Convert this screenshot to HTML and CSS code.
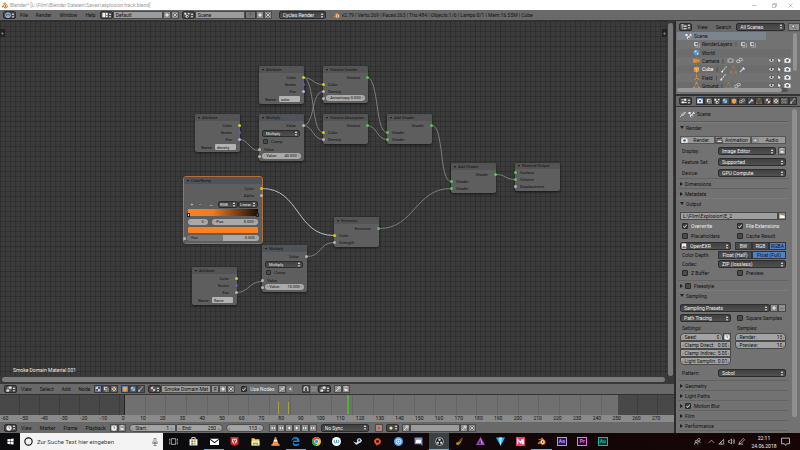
FILE: index.html
```html
<!DOCTYPE html>
<html lang="de">
<head>
  <meta charset="UTF-8">
  <title>Blender* [L:\Film\Blender Dateien\Saves\explosion track.blend]</title>
  <link rel="stylesheet" href="styles.css">
</head>
<body>
  <svg class="sprite" aria-hidden="true">
    <symbol id="blender" viewBox="0 0 16 16"><path d="M1 11 8 5H3V3.500h5L7 2l2-1 5 5a5 5 0 1 1-8.500 5L3 13z" fill="#ee7a1a"/><circle cx="10" cy="9" r="3.200" fill="#fff"/><circle cx="10" cy="9" r="1.700" fill="#27507f"/></symbol>
    <symbol id="info" viewBox="0 0 16 16"><circle cx="8" cy="8" r="7" fill="#dfe6ee"/><circle cx="8" cy="8" r="5.500" fill="#31639c"/><path d="M7 3h2v2H7zM7 6.500h2V13H7z" fill="#fff"/></symbol>
    <symbol id="layout" viewBox="0 0 16 16"><path d="M1 2h8v12H1zM10.500 2H15v7h-4.500zM10.500 10.500H15V14h-4.500z" fill="#eee"/></symbol>
    <symbol id="scene" viewBox="0 0 16 16"><path d="M1 2h5v5H1zM9 6l4-5 3 5z" fill="#eee"/><circle cx="8" cy="11" r="4" fill="#ddd"/><circle cx="9" cy="12" r="2" fill="#555"/></symbol>
    <symbol id="nodes" viewBox="0 0 16 16"><path d="M1 9h7v6H1zM7 1h8v6H7z" fill="#e6e6e6"/><path d="M4 9V4h3M11 7v5H8" fill="none" stroke="#ddd"/></symbol>
    <symbol id="tree" viewBox="0 0 16 16"><path d="M3 1v12h5M3 6h5" fill="none" stroke="#eee" stroke-width="1.500"/><path d="M8 4h7v3H8zM8 11h7v3H8zM1 1h6v2H1z" fill="#eee"/></symbol>
    <symbol id="sliders" viewBox="0 0 16 16"><path d="M1 3h14v3H1zM1 10h14v3H1z" fill="#ccc"/><path d="M9 2h4v5H9zM3 9h4v5H3z" fill="#fff"/></symbol>
    <symbol id="clock" viewBox="0 0 16 16"><circle cx="8" cy="8" r="7" fill="#eee"/><path d="M8 3v5l3 2" fill="none" stroke="#333" stroke-width="1.500"/></symbol>
    <symbol id="ball" viewBox="0 0 16 16"><circle cx="8" cy="8" r="6.500" fill="#d5c8c4"/><path d="M8 1.500A6.500 6.500 0 0 1 14.500 8H8zM1.500 8H8v6.500A6.500 6.500 0 0 1 1.500 8" fill="#6c504b"/></symbol>
    <symbol id="world" viewBox="0 0 16 16"><circle cx="8" cy="8" r="6.500" fill="#5a96c6"/><path d="M4 4c3-2 5 0 4 2S4 8 3 7zM9 9c3-1 4 0 3 3s-3 1-3-3" fill="#cfe3ee"/></symbol>
    <symbol id="camera" viewBox="0 0 16 16"><path d="M1 4h3l1-2h5l1 2h4v9H1z" fill="#eef0f2"/><circle cx="8" cy="8" r="3" fill="#4a5969"/></symbol>
    <symbol id="film" viewBox="0 0 16 16"><path d="M1 6h14v8H1zM1 2l13-1v3L1 5z" fill="#333"/><path d="M3 8h10v4H3z" fill="#ddd"/></symbol>
    <symbol id="sound" viewBox="0 0 16 16"><path d="M1 3h13v9H1z" fill="none" stroke="#666"/><path d="M3 6h3l4-3v9L6 9H3z" fill="#ddd" stroke="#777"/></symbol>
    <symbol id="layers" viewBox="0 0 16 16"><path d="M2 2h10v10H2z" fill="#eee" stroke="#444"/><circle cx="8" cy="7" r="3" fill="#667"/><path d="M5 14h10V5" fill="none" stroke="#ddd"/></symbol>
    <symbol id="cube" viewBox="0 0 16 16"><path d="m8 1 6 3v8l-6 3-6-3V4z" fill="#ec9340"/><path d="m2 4 6 3 6-3M8 7v8" fill="none" stroke="#ffe0b5"/></symbol>
    <symbol id="mesh" viewBox="0 0 16 16"><path d="M8 1.500 15 14H1z" fill="none" stroke="#e88b2d" stroke-width="1.500"/><path d="M6 0h4v4H6zM0 12h4v4H0zM12 12h4v4h-4z" fill="#ed952f"/></symbol>
    <symbol id="cam-object" viewBox="0 0 16 16"><path d="M0 4h10v3l5-3v9l-5-3v3H0z" fill="#ec8725"/></symbol>
    <symbol id="field" viewBox="0 0 16 16"><path d="M8 1v8L2 14M8 9l7 4" fill="none" stroke="#f28c28" stroke-width="2"/></symbol>
    <symbol id="link" viewBox="0 0 16 16"><ellipse cx="5" cy="10" rx="4" ry="3" fill="none" stroke="#ddd" stroke-width="1.500"/><ellipse cx="11" cy="6" rx="4" ry="3" fill="none" stroke="#ddd" stroke-width="1.500"/></symbol>
    <symbol id="wrench" viewBox="0 0 16 16"><path d="m2 14 8-8" stroke="#c6d2e6" stroke-width="3"/><path d="M9 2 8 7l4 2 3-4-3 1-1-3z" fill="#dce4ef"/></symbol>
    <symbol id="curve" viewBox="0 0 16 16"><path d="M2 14C3 5 7 13 8 7s3-4 6-5" fill="none" stroke="#d6d6d6" stroke-width="1.800"/><circle cx="3" cy="13" r="2" fill="#eee"/></symbol>
    <symbol id="checker" viewBox="0 0 16 16"><path d="M2 2h12v12H2z" fill="#eadfd6"/><path d="M2 2h4v4H2zM10 2h4v4h-4zM6 6h4v4H6zM2 10h4v4H2zM10 10h4v4h-4z" fill="#735b51"/></symbol>
    <symbol id="particles" viewBox="0 0 16 16"><path d="M3 1v14M8 3v11M13 1v14M1 4h14M1 11h14" stroke="#cfc6b5" stroke-width="1.500" stroke-dasharray="2 1"/></symbol>
    <symbol id="plus" viewBox="0 0 16 16"><path d="M6 2h4v4h4v4h-4v4H6v-4H2V6h4z" fill="#fff" stroke="#555"/></symbol>
    <symbol id="cross" viewBox="0 0 16 16"><path d="m3 3 10 10M13 3 3 13" stroke="#555" stroke-width="4"/><path d="m3 3 10 10M13 3 3 13" stroke="#eee" stroke-width="2"/></symbol>
    <symbol id="eye" viewBox="0 0 16 16"><path d="M1 6c4 7 10 7 14 0-4-3-10-3-14 0" fill="#e8e8e8" stroke="#333"/><circle cx="8" cy="7" r="2" fill="#222"/></symbol>
    <symbol id="cursor" viewBox="0 0 16 16"><path d="m4 1 9 8-4 1 2 5-2 1-2-5-3 2z" fill="#eee" stroke="#222"/></symbol>
    <symbol id="search" viewBox="0 0 16 16"><circle cx="6" cy="6" r="4" fill="#ddd" stroke="#555" stroke-width="2"/><path d="m9 9 5 5" stroke="#555" stroke-width="2"/></symbol>
    <symbol id="pin" viewBox="0 0 16 16"><path d="m2 14 5-5M5 6l5 5M7 8l6-6 2 2-6 6" stroke="#ddd" stroke-width="2" fill="none"/></symbol>
    <symbol id="lock" viewBox="0 0 16 16"><path d="M3 7h10v7H3z" fill="#eee" stroke="#555"/><path d="M5 7V4a3 3 0 0 1 6 0" fill="none" stroke="#eee" stroke-width="1.800"/></symbol>
    <symbol id="folder" viewBox="0 0 16 16"><path d="M1 3h6l1 2h7v9H1z" fill="#eae2bd" stroke="#655"/><path d="M3 7h12v6H2z" fill="#fff8dc"/></symbol>
    <symbol id="image" viewBox="0 0 16 16"><path d="M2 1h12v14H2z" fill="#eee"/><path d="m3 13 4-6 3 3 1-2 2 5z" fill="#a45555"/></symbol>
    <symbol id="magnet" viewBox="0 0 16 16"><path d="M3 13V7a5 5 0 0 1 10 0v6" fill="none" stroke="#ddd" stroke-width="3"/></symbol>
    <symbol id="record" viewBox="0 0 16 16"><circle cx="8" cy="8" r="5" fill="#d34a3c" stroke="#f0b1a6"/></symbol>
    <symbol id="key" viewBox="0 0 16 16"><circle cx="11" cy="5" r="3" fill="none" stroke="#eee" stroke-width="2"/><path d="m9 7-7 7M4 12l2 2" stroke="#eee" stroke-width="2"/></symbol>
    <symbol id="diamond" viewBox="0 0 16 16"><path d="m8 3 5 5-5 5-5-5z" fill="#f0e2a0"/></symbol>
    <symbol id="play" viewBox="0 0 16 16"><path d="M4 2v12l9-6z" fill="#fff" stroke="#444"/></symbol>
    <symbol id="back" viewBox="0 0 16 16"><path d="M12 2v12L3 8z" fill="#fff" stroke="#444"/></symbol>
    <symbol id="rewind" viewBox="0 0 16 16"><path d="M8 3v10L2 8zM14 3v10L8 8z" fill="#fff" stroke="#555"/></symbol>
    <symbol id="forward" viewBox="0 0 16 16"><path d="M8 3v10l6-5zM2 3v10l6-5z" fill="#fff" stroke="#555"/></symbol>
  </svg>

  <header class="titlebar">
    <svg class="icon"><use href="#blender"/></svg>
    <span class="title">Blender* [L:\Film\Blender Dateien\Saves\explosion track.blend]</span>
    <button class="win-btn" aria-label="Minimieren"><svg viewBox="0 0 10 10"><path d="M1 5h8"/></svg></button>
    <button class="win-btn" aria-label="Verkleinern"><svg viewBox="0 0 10 10"><path d="M1 3h6v6H1zM3 3V1h6v6H7"/></svg></button>
    <button class="win-btn" aria-label="Schließen"><svg viewBox="0 0 10 10"><path d="m1 1 8 8M9 1 1 9"/></svg></button>
  </header>

  <nav class="bar info-bar">
    <button class="editor-type" aria-label="Editor type"><svg class="icon"><use href="#info"/></svg></button>
    <div class="menus">
      <button>File</button><button>Render</button><button>Window</button><button>Help</button>
    </div>
    <div class="group snug">
      <button class="editor-type" aria-label="Screen"><svg class="icon"><use href="#layout"/></svg></button>
      <input class="name-field" aria-label="Screen name" value="Default">
      <button class="tool light" aria-label="Add screen"><svg class="icon"><use href="#plus"/></svg></button>
      <button class="tool light" aria-label="Delete screen"><svg class="icon"><use href="#cross"/></svg></button>
    </div>
    <div class="group">
      <button class="editor-type" aria-label="Scene"><svg class="icon"><use href="#scene"/></svg></button>
      <input class="name-field" aria-label="Scene name" value="Scene">
      <button class="tool users">7</button>
      <button class="tool light" aria-label="Add scene"><svg class="icon"><use href="#plus"/></svg></button>
      <button class="tool light" aria-label="Delete scene"><svg class="icon"><use href="#cross"/></svg></button>
    </div>
    <select class="engine" aria-label="Render engine"><option>Cycles Render</option></select>
    <svg class="icon logo"><use href="#blender"/></svg>
    <span class="stats">v2.79 | Verts:269 | Faces:263 | Tris:484 | Objects:1/6 | Lamps:0/1 | Mem:16.55M | Cube</span>
  </nav>

  <div class="workspace">
    <main class="editors">
      <section class="node-editor">
        <div class="canvas">
          <svg class="links">
            <path d="M303 56.500C313 56.500 313 63.500 323 63.500"/>
            <path d="M303 56.500C315 56.500 311 111.500 323 111.500"/>
            <path d="M303 104.500C315 104.500 311 70.500 323 70.500"/>
            <path d="M303 104.500C313 104.500 313 118.500 323 118.500"/>
            <path d="M239 118.500C249 118.500 249 129.500 259 129.500"/>
            <path d="M367 56.500C379 56.500 375 111.500 387 111.500"/>
            <path d="M367 104.500C377 104.500 377 118.500 387 118.500"/>
            <path d="M432 104.500C444 104.500 439 160.500 451 160.500"/>
            <path d="M379 207.500C415 207.500 415 167.500 451 167.500"/>
            <path d="M496 153.500C506 153.500 505 158.500 515 158.500"/>
            <path class="active" d="M262 167.500C300 167.500 296 214.500 334 214.500"/>
            <path d="M307 235.500C322 235.500 319 221.500 334 221.500"/>
            <path d="M236 271.500C249 271.500 249 260.500 262 260.500"/>
          </svg>

          <article class="node attr-color">
            <h2>Attribute</h2>
            <p class="out yellow">Color</p>
            <p class="out blue">Vector</p>
            <p class="out gray">Fac</p>
            <label class="name space">Name: <input value="color"></label>
          </article>

          <article class="node scatter">
            <h2>Volume Scatter</h2>
            <p class="out green">Volume</p>
            <p class="in yellow">Color</p>
            <p class="in gray">Density</p>
            <div class="in gray"><label class="num">Anisotropy: <input value="0.000"></label></div>
          </article>

          <article class="node attr-density">
            <h2>Attribute</h2>
            <p class="out yellow">Color</p>
            <p class="out blue">Vector</p>
            <p class="out gray">Fac</p>
            <label class="name space">Name: <input value="density"></label>
          </article>

          <article class="node math multiply-a">
            <h2>Multiply</h2>
            <p class="out gray">Value</p>
            <select class="space" aria-label="Operation"><option>Multiply</option></select>
            <label class="check space"><input type="checkbox"> Clamp</label>
            <p class="in gray space">Value</p>
            <div class="in gray"><label class="num">Value: <input value="40.000"></label></div>
          </article>

          <article class="node absorption">
            <h2>Volume Absorption</h2>
            <p class="out green">Volume</p>
            <p class="in yellow">Color</p>
            <p class="in gray">Density</p>
          </article>

          <article class="node add-a">
            <h2>Add Shader</h2>
            <p class="out green">Shader</p>
            <p class="in green">Shader</p>
            <p class="in green">Shader</p>
          </article>

          <article class="node add-b">
            <h2>Add Shader</h2>
            <p class="out green">Shader</p>
            <p class="in green">Shader</p>
            <p class="in green">Shader</p>
          </article>

          <article class="node output">
            <h2>Material Output</h2>
            <p class="in green">Surface</p>
            <p class="in green">Volume</p>
            <p class="in gray">Displacement</p>
          </article>

          <article class="node emission">
            <h2>Emission</h2>
            <p class="out green">Emission</p>
            <p class="in yellow">Color</p>
            <p class="in gray">Strength</p>
          </article>

          <article class="node ramp">
            <h2>ColorRamp</h2>
            <p class="out yellow">Color</p>
            <p class="out gray">Alpha</p>
            <div class="ramp-tools">
              <button>+</button><button>−</button><button>↔</button>
              <select aria-label="Color mode"><option>RGB</option></select>
              <select aria-label="Interpolation"><option>Linear</option></select>
            </div>
            <div class="gradient"><i class="stop"></i><i class="stop end"></i></div>
            <div class="ramp-pos">
              <label class="num"><input aria-label="Stop" value="0"></label>
              <label class="num">Pos: <input value="0.000"></label>
            </div>
            <button class="swatch" aria-label="Stop color"></button>
            <div class="in gray"><label class="num factor">Fac: <input value="0.500"></label></div>
          </article>

          <article class="node math multiply-b">
            <h2>Multiply</h2>
            <p class="out gray">Value</p>
            <select class="space" aria-label="Operation"><option>Multiply</option></select>
            <label class="check space"><input type="checkbox"> Clamp</label>
            <p class="in gray space">Value</p>
            <div class="in gray"><label class="num">Value: <input value="10.000"></label></div>
          </article>

          <article class="node attr-flame">
            <h2>Attribute</h2>
            <p class="out yellow">Color</p>
            <p class="out blue">Vector</p>
            <p class="out gray">Fac</p>
            <label class="name space">Name: <input value="flame"></label>
          </article>

          <button class="expand left">+</button>
          <button class="expand right">+</button>
          <span class="material-name">Smoke Domain Material.001</span>
        </div>
        <div class="scroll-y"></div>
        <div class="scroll-x"></div>
      </section>

      <nav class="bar">
        <button class="editor-type" aria-label="Node editor"><svg class="icon"><use href="#nodes"/></svg></button>
        <div class="menus">
          <button>View</button><button>Select</button><button>Add</button><button>Node</button>
        </div>
        <div class="group snug">
          <button class="tool on" aria-label="Shader nodes"><svg class="icon"><use href="#ball"/></svg></button>
          <button class="tool" aria-label="Compositing nodes"><svg class="icon"><use href="#layers"/></svg></button>
          <button class="tool" aria-label="Texture nodes"><svg class="icon"><use href="#checker"/></svg></button>
        </div>
        <div class="group">
          <button class="tool on" aria-label="Object"><svg class="icon"><use href="#cube"/></svg></button>
          <button class="tool" aria-label="World"><svg class="icon"><use href="#world"/></svg></button>
          <button class="tool" aria-label="Line style"><svg class="icon"><use href="#curve"/></svg></button>
        </div>
        <div class="group">
          <button class="editor-type" aria-label="Material"><svg class="icon"><use href="#ball"/></svg></button>
          <input class="name-field" aria-label="Material name" value="Smoke Domain Mat..">
          <button class="tool light">F</button>
          <button class="tool light" aria-label="Add material"><svg class="icon"><use href="#plus"/></svg></button>
          <button class="tool light" aria-label="Unlink material"><svg class="icon"><use href="#cross"/></svg></button>
        </div>
        <label class="check use-nodes"><input type="checkbox" checked> Use Nodes</label>
        <div class="group">
          <button class="tool light" aria-label="Pin"><svg class="icon"><use href="#pin"/></svg></button>
          <button class="tool faint" aria-label="Parent"><svg class="icon"><use href="#back"/></svg></button>
        </div>
        <div class="group wide">
          <button class="tool" aria-label="Snap"><svg class="icon"><use href="#magnet"/></svg></button>
          <button class="tool faint" aria-label="Grid"><svg class="icon"><use href="#particles"/></svg></button>
          <button class="editor-type" aria-label="Snap element"><svg class="icon"><use href="#nodes"/></svg></button>
        </div>
        <div class="group">
          <button class="tool light" aria-label="Copy"><svg class="icon"><use href="#key"/></svg></button>
          <button class="tool light" aria-label="Paste"><svg class="icon"><use href="#lock"/></svg></button>
        </div>
      </nav>

      <section class="timeline">
        <div class="track">
          <div class="outside before"></div>
          <div class="range">
            <i class="keyframe first"></i><i class="keyframe second"></i><i class="playhead"></i>
          </div>
          <div class="outside after"></div>
        </div>
        <div class="ruler">
          <span>-60</span><span>-50</span><span>-40</span><span>-30</span><span>-20</span><span>-10</span><span>0</span><span>10</span><span>20</span><span>30</span><span>40</span><span>50</span><span>60</span><span>70</span><span>80</span><span>90</span><span>100</span><span>110</span><span>120</span><span>130</span><span>140</span><span>150</span><span>160</span><span>170</span><span>180</span><span>190</span><span>200</span><span>210</span><span>220</span><span>230</span><span>240</span><span>250</span><span>260</span><span>270</span>
        </div>
      </section>

      <nav class="bar timeline-bar">
        <button class="editor-type" aria-label="Timeline"><svg class="icon"><use href="#clock"/></svg></button>
        <div class="menus">
          <button>View</button><button>Marker</button><button>Frame</button><button>Playback</button>
        </div>
        <div class="group snug">
          <button class="tool light" aria-label="Preview range"><svg class="icon"><use href="#clock"/></svg></button>
          <button class="tool light" aria-label="Lock time"><svg class="icon"><use href="#lock"/></svg></button>
        </div>
        <div class="group frames">
          <label class="num">Start: <input value="1"></label>
          <label class="num">End: <input value="250"></label>
        </div>
        <label class="num current"><input aria-label="Current frame" value="113"></label>
        <div class="group transport">
          <button class="tool light" aria-label="Jump to start"><svg class="icon"><use href="#rewind"/></svg></button>
          <button class="tool light" aria-label="Previous key"><svg class="icon"><use href="#rewind"/></svg></button>
          <button class="tool light" aria-label="Play reversed"><svg class="icon"><use href="#back"/></svg></button>
          <button class="tool light" aria-label="Play"><svg class="icon"><use href="#play"/></svg></button>
          <button class="tool light" aria-label="Next key"><svg class="icon"><use href="#forward"/></svg></button>
          <button class="tool light" aria-label="Jump to end"><svg class="icon"><use href="#forward"/></svg></button>
        </div>
        <select class="sync" aria-label="Sync"><option>No Sync</option></select>
        <button class="tool light auto" aria-label="Record"><svg class="icon"><use href="#record"/></svg></button>
        <button class="editor-type" aria-label="Keyframe type"><svg class="icon"><use href="#diamond"/></svg></button>
        <div class="group keying">
          <button class="tool light" aria-label="Keying set"><svg class="icon"><use href="#key"/></svg></button>
          <input class="name-field" aria-label="Active keying set">
          <button class="tool light" aria-label="Insert keyframe"><svg class="icon"><use href="#key"/></svg></button>
          <button class="tool light" aria-label="Delete keyframe"><svg class="icon"><use href="#cross"/></svg></button>
        </div>
      </nav>
    </main>

    <aside class="sidebar">
      <section class="outliner">
        <nav class="bar">
          <button class="editor-type" aria-label="Outliner"><svg class="icon"><use href="#tree"/></svg></button>
          <div class="menus"><button>View</button><button>Search</button></div>
          <select class="display-mode" aria-label="Display mode"><option>All Scenes</option></select>
          <button class="tool light filter" aria-label="Filter"><svg class="icon"><use href="#search"/></svg></button>
        </nav>
        <div class="tree-box">
          <ul class="tree">
            <li class="root selected"><svg class="icon"><use href="#scene"/></svg><span>Scene</span></li>
            <li><svg class="icon"><use href="#layers"/></svg><span>RenderLayers</span><b>|</b><svg class="icon"><use href="#layers"/></svg><svg class="icon"><use href="#layers"/></svg></li>
            <li><svg class="icon"><use href="#world"/></svg><span>World</span></li>
            <li><svg class="icon"><use href="#cam-object"/></svg><span>Camera</span><b>|</b><svg class="icon dim"><use href="#camera"/></svg><svg class="icon"><use href="#link"/></svg>
              <div class="toggles"><svg class="icon"><use href="#eye"/></svg><svg class="icon"><use href="#cursor"/></svg><svg class="icon"><use href="#camera"/></svg></div></li>
            <li class="active"><svg class="icon"><use href="#cube"/></svg><span>Cube</span><b>|</b><svg class="icon"><use href="#curve"/></svg><svg class="icon dim"><use href="#mesh"/></svg><svg class="icon"><use href="#wrench"/></svg>
              <div class="toggles"><svg class="icon"><use href="#eye"/></svg><svg class="icon"><use href="#cursor"/></svg><svg class="icon"><use href="#camera"/></svg></div></li>
            <li><svg class="icon"><use href="#field"/></svg><span>Field</span><b>|</b><svg class="icon"><use href="#curve"/></svg>
              <div class="toggles"><svg class="icon"><use href="#eye"/></svg><svg class="icon"><use href="#cursor"/></svg><svg class="icon"><use href="#camera"/></svg></div></li>
            <li><svg class="icon"><use href="#mesh"/></svg><span>Ground</span><b>|</b><svg class="icon dim"><use href="#mesh"/></svg><svg class="icon"><use href="#link"/></svg>
              <div class="toggles"><svg class="icon"><use href="#eye"/></svg><svg class="icon"><use href="#cursor"/></svg><svg class="icon"><use href="#camera"/></svg></div></li>
          </ul>
          <div class="tree-scroll"></div>
        </div>
        <div class="tree-scroll-x"></div>
      </section>

      <section class="properties">
        <nav class="bar">
          <button class="editor-type" aria-label="Properties"><svg class="icon"><use href="#sliders"/></svg></button>
          <div class="tabs">
            <button class="on" aria-label="Render"><svg class="icon"><use href="#camera"/></svg></button>
            <button aria-label="Render layers"><svg class="icon"><use href="#layers"/></svg></button>
            <button aria-label="Scene"><svg class="icon"><use href="#scene"/></svg></button>
            <button aria-label="World"><svg class="icon"><use href="#world"/></svg></button>
            <button aria-label="Object"><svg class="icon"><use href="#cube"/></svg></button>
            <button aria-label="Constraints"><svg class="icon"><use href="#link"/></svg></button>
            <button aria-label="Modifiers"><svg class="icon"><use href="#wrench"/></svg></button>
            <button aria-label="Data"><svg class="icon dim"><use href="#mesh"/></svg></button>
            <button aria-label="Material"><svg class="icon"><use href="#ball"/></svg></button>
            <button aria-label="Texture"><svg class="icon"><use href="#checker"/></svg></button>
            <button aria-label="Particles"><svg class="icon"><use href="#particles"/></svg></button>
            <button aria-label="Physics"><svg class="icon"><use href="#curve"/></svg></button>
          </div>
        </nav>
        <div class="panels-box">
          <div class="panels">
            <div class="context"><svg class="icon"><use href="#pin"/></svg><svg class="icon"><use href="#scene"/></svg><span>Scene</span></div>

            <h3 class="open">Render</h3>
            <div class="panel render-panel">
              <div class="row joined">
                <button class="action"><svg class="icon"><use href="#camera"/></svg><span>Render</span></button>
                <button class="action"><svg class="icon"><use href="#film"/></svg><span>Animation</span></button>
                <button class="action"><svg class="icon"><use href="#sound"/></svg><span>Audio</span></button>
              </div>
              <div class="row field"><label for="display">Display:</label><select id="display"><option>Image Editor</option></select><button class="tool light" aria-label="Lock interface"><svg class="icon"><use href="#lock"/></svg></button></div>
              <div class="row field"><label for="feature">Feature Set:</label><select id="feature"><option>Supported</option></select></div>
              <div class="row field"><label for="device">Device:</label><select id="device"><option>GPU Compute</option></select></div>
            </div>
            <h3>Dimensions</h3>
            <h3>Metadata</h3>

            <h3 class="open">Output</h3>
            <div class="panel">
              <div class="row path"><input aria-label="Output path" value="L:\Film\Explosion\E_2"><button class="tool light" aria-label="Browse"><svg class="icon"><use href="#folder"/></svg></button></div>
              <div class="row halves">
                <label class="check"><input type="checkbox" checked> Overwrite</label>
                <label class="check"><input type="checkbox" checked> File Extensions</label>
              </div>
              <div class="row halves">
                <label class="check"><input type="checkbox"> Placeholders</label>
                <label class="check"><input type="checkbox"> Cache Result</label>
              </div>
              <div class="row halves">
                <div class="format"><svg class="icon"><use href="#image"/></svg><select aria-label="File format"><option>OpenEXR</option></select></div>
                <div class="switch"><button>BW</button><button>RGB</button><button class="on">RGBA</button></div>
              </div>
              <div class="row field tight"><span>Color Depth:</span><div class="switch"><button>Float (Half)</button><button class="on">Float (Full)</button></div></div>
              <div class="row field tight"><label for="codec">Codec:</label><select id="codec"><option>ZIP (lossless)</option></select></div>
              <div class="row halves tight">
                <label class="check"><input type="checkbox"> Z Buffer</label>
                <label class="check"><input type="checkbox"> Preview</label>
              </div>
            </div>
            <h3><label class="check"><input type="checkbox"> Freestyle</label></h3>

            <h3 class="open">Sampling</h3>
            <div class="panel">
              <div class="row presets"><select aria-label="Sampling presets"><option>Sampling Presets</option></select><button class="tool light" aria-label="Add preset"><svg class="icon"><use href="#plus"/></svg></button><button class="tool light" aria-label="Remove preset">−</button></div>
              <div class="row halves">
                <select aria-label="Integrator"><option>Path Tracing</option></select>
                <label class="check"><input type="checkbox"> Square Samples</label>
              </div>
              <div class="row halves"><span>Settings:</span><span>Samples:</span></div>
              <div class="row halves stacks tight">
                <div class="stack">
                  <div class="seed"><label class="num">Seed: <input value="0"></label><button class="tool light" aria-label="Animate seed"><svg class="icon"><use href="#clock"/></svg></button></div>
                  <label class="num">Clamp Direct: <input value="0.00"></label>
                  <label class="num">Clamp Indirec: <input value="5.00"></label>
                  <label class="num">Light Samplin: <input value="0.01"></label>
                </div>
                <div class="stack">
                  <label class="num">Render: <input value="15"></label>
                  <label class="num">Preview: <input value="10"></label>
                </div>
              </div>
              <div class="row field pattern"><label for="pattern">Pattern:</label><select id="pattern"><option>Sobol</option></select></div>
            </div>
            <h3>Geometry</h3>
            <h3>Light Paths</h3>
            <h3><label class="check"><input type="checkbox" checked> Motion Blur</label></h3>
            <h3>Film</h3>
            <h3>Performance</h3>
            <h3>Post Processing</h3>
          </div>
          <div class="panel-scroll"></div>
        </div>
      </section>
    </aside>
  </div>

  <footer class="taskbar">
    <button class="start" aria-label="Start"><svg viewBox="0 0 16 16"><path d="m1 3 6-1v5.500H1zM8 2l7-1v6.500H8zM1 8.500h6V14l-6-1zM8 8.500h7V15l-7-1z" fill="#fff"/></svg></button>
    <label class="search">
      <svg viewBox="0 0 16 16"><circle cx="8" cy="8" r="6.500" fill="none" stroke="#111" stroke-width="2"/></svg>
      <input placeholder="Zur Suche Text hier eingeben">
      <svg viewBox="0 0 16 16"><path d="M6 1h4v8H6zM3.500 7v4h9V7M8 11v4M5 15h6" fill="none" stroke="#333"/></svg>
    </label>
    <div class="apps">
      <button aria-label="Taskansicht"><svg viewBox="0 0 16 16"><path d="M4 3h8v10H4zM2 4H0v8h2M14 4h2v8h-2" fill="none" stroke="#ddd" stroke-width="1.300"/></svg></button>
      <button aria-label="Store"><svg viewBox="0 0 16 16"><path d="M1 4h14v11H1z" fill="#fff"/><path d="M5 4V1h6v3" fill="none" stroke="#fff" stroke-width="1.500"/><path d="M4 6h3.500v3.500H4z" fill="#e74b2c"/><path d="M8.500 6H12v3.500H8.500z" fill="#7cb829"/><path d="M4 10.500h3.500V14H4z" fill="#28a3de"/><path d="M8.500 10.500H12V14H8.500z" fill="#f8b621"/></svg></button>
      <button class="running" aria-label="Mail"><svg viewBox="0 0 16 16"><path d="M0 3h16l-8 6zM0 5l8 6 8-6v9H0z" fill="#fff"/></svg></button>
      <button aria-label="Virenschutz"><svg viewBox="0 0 16 16"><path d="M1 0h14v13l-7 3-7-3z" fill="#d8262c"/><path d="M4 3h8v6l-4 4-4-4z" fill="#fff"/><path d="m6 5 2 5 2-5" fill="none" stroke="#d8262c" stroke-width="2"/></svg></button>
      <button aria-label="Explorer"><svg viewBox="0 0 16 16"><path d="M1 2h5l1 2h8v11H1z" fill="#f5ce62"/><path d="M1 7h14v8H1z" fill="#fbe69c"/><path d="M4 10h8v5h-2v-3H6v3H4z" fill="#3aa4dc"/></svg></button>
      <button aria-label="VLC"><svg viewBox="0 0 16 16"><path d="M7 0h2l5 14H2z" fill="#f58220"/><path d="m5.500 5h5l1 3h-7zM3 12h10v2H2z" fill="#fff"/><path d="M0 13h16l-1 3H1z" fill="#e8751a"/></svg></button>
      <button class="running" aria-label="Edge"><svg viewBox="0 0 16 16"><path d="M4 9h11C16 3 12 0 8 0 4 0 1 3 1 7c2-3 4-4 6-4 3 0 4 1 4 3H5C2 8 2 16 9 16c2 0 4-1 5-2v-3c-4 3-9 2-10-2" fill="#1683d8"/></svg></button>
      <button aria-label="Chrome"><svg viewBox="0 0 16 16"><circle cx="8" cy="8" r="8" fill="#f2c51e"/><path d="M1 4a8 8 0 0 1 14 0H8L5 9z" fill="#dd4b3d"/><path d="M1 4a8 8 0 0 0 6 12l4-7H5z" fill="#269c55"/><circle cx="8" cy="8" r="4" fill="#fff"/><circle cx="8" cy="8" r="3" fill="#4a8af4"/></svg></button>
      <button aria-label="Wire"><svg viewBox="0 0 16 16"><circle cx="8" cy="8" r="8" fill="#fff"/><path d="M4 5v4q2 4 4 0V5v4q2 4 4 0V5" fill="none" stroke="#2a97b9" stroke-width="1.500"/></svg></button>
      <button aria-label="Steam"><svg viewBox="0 0 16 16"><path d="M0 8 6 10 9 6l5-3 2 4-4 3-4 3q-3 2-4-1z" fill="#d6e5ef"/><circle cx="11" cy="6" r="4" fill="#d6e5ef"/><circle cx="11" cy="6" r="2" fill="#234a70"/></svg></button>
      <button aria-label="Origin"><svg viewBox="0 0 16 16"><path d="M9 0c-1 2 0 2 2 3 6 4 2 11-3 11l-2 2c1-2 0-2-1-3C-1 8 3 2 8 2z" fill="#f05a28"/><circle cx="8" cy="8" r="2.500" fill="#111"/></svg></button>
      <button aria-label="Uplay"><svg viewBox="0 0 16 16"><circle cx="8" cy="8" r="8" fill="#4b9ff0"/><circle cx="8" cy="8" r="4.500" fill="none" stroke="#fff" stroke-width="1.500"/><circle cx="8" cy="8" r="1.800" fill="#fff"/></svg></button>
      <button aria-label="Discord"><svg viewBox="0 0 16 16"><path d="M1 1h14v15l-3-3H1z" fill="#8191d2"/><path d="M4 5h8l1 5-3 1-2-1-2 1-3-1z" fill="#fff"/></svg></button>
      <button class="running focused" aria-label="OBS"><svg viewBox="0 0 16 16"><circle cx="8" cy="8" r="7" fill="#171717" stroke="#ddd" stroke-width="1.300"/><circle cx="8" cy="5" r="2.200" fill="#ccc"/><circle cx="5" cy="10" r="2.200" fill="#ccc"/><circle cx="11" cy="10" r="2.200" fill="#ccc"/></svg></button>
      <button aria-label="FL Studio"><svg viewBox="0 0 16 16"><path d="M2 10q5-1 8-6l4-3-2 5q-2 6-6 8-5 1-4-4" fill="#c68a32"/><path d="M6 9q4-1 6-5" stroke="#503312" stroke-width="1.500"/></svg></button>
      <button aria-label="Affinity Photo"><svg viewBox="0 0 16 16"><path d="M8 0 0 14h16z" fill="#a04bb6"/><path d="m8 6-4 6h8z" fill="#432553"/><path d="m8 0 4 12H9z" fill="#e189f0"/></svg></button>
      <button aria-label="Vegas"><svg viewBox="0 0 16 16"><path d="M0 1h16L8 16z" fill="#21b9ed"/><path d="m5 1 3 15 3-15z" fill="#a5e8f9"/></svg></button>
      <button aria-label="Magix"><svg viewBox="0 0 16 16"><path d="M0 0h16v16H0z" fill="#ec3c70"/><path d="M3 13V4l5 6 3-6v9M13 3v10" fill="none" stroke="#fff" stroke-width="2"/></svg></button>
      <button class="running" aria-label="Blender"><svg><use href="#blender"/></svg></button>
      <button><span class="adobe ae">Ae</span></button>
      <button><span class="adobe pr">Pr</span></button>
      <button><span class="adobe au">Au</span></button>
    </div>
    <div class="tray">
      <svg viewBox="0 0 16 16"><circle cx="11" cy="4" r="3"/><circle cx="5" cy="8" r="2.500"/><path d="M1 15q0-5 4-5t4 5M9 9q4-3 6 3"/></svg>
      <svg viewBox="0 0 16 16"><path d="m2 11 6-6 6 6"/></svg>
      <svg viewBox="0 0 16 16"><path d="M2 14 13 3v11zM7 14V9"/></svg>
      <svg viewBox="0 0 16 16"><path d="M1 6h3l4-4v12l-4-4H1zM11 5q3 3 0 6M13 2q5 6 0 12"/></svg>
      <svg viewBox="0 0 16 16"><path d="m4 9 8-8 3 3-8 8-5 1zM1 15q6-2 11-1"/></svg>
    </div>
    <time class="clock" datetime="2018-06-24T22:11"><span>22:11</span><span>24.06.2018</span></time>
    <button class="notify" aria-label="Info-Center"><svg viewBox="0 0 16 16"><path d="M1 2h14v10h-5l-2 3-2-3H1z" fill="none" stroke="#eee" stroke-width="1.300"/></svg></button>
  </footer>
</body>
</html>
```

FILE: styles.css
```css
* {
  box-sizing: border-box;
}

body {
  display: flex;
  flex-direction: column;
  height: 100vh;
  margin: 0;
  overflow: hidden;
  background: #2b2b2b;
  color: #111;
  font: 5px/8px Roboto, "Open Sans", sans-serif;
}

button, input, select {
  margin: 0;
  padding: 0;
  border: 0;
  border-radius: 0;
  background: none;
  color: inherit;
  font: inherit;
  min-width: 0;
}

h2, h3, p, ul {
  margin: 0;
  padding: 0;
  font: inherit;
  list-style: none;
}

input {
  outline: none;
}

.sprite {
  display: none;
}

.icon {
  display: block;
  flex: none;
  width: 7px;
  height: 7px;
}

.icon.dim {
  opacity: 0.4;
}

/* shared controls */
select {
  appearance: none;
  height: 8px;
  padding: 0 6px 0 3px;
  border: 1px solid #2c2c2c;
  border-radius: 2px;
  background: url("data:image/svg+xml,%3Csvg xmlns='http://www.w3.org/2000/svg' viewBox='0 0 6 8'%3E%3Cpath d='M3 0 5 3H1zM3 8 1 5h4z' fill='%23ddd'/%3E%3C/svg%3E") no-repeat right 1px center / 4px 5px, linear-gradient(#414141, #505050);
  color: #eee;
  line-height: 6px;
}

.check {
  display: flex;
  align-items: center;
  gap: 3px;
}

.check input {
  appearance: none;
  flex: none;
  width: 6px;
  height: 6px;
  border: 1px solid #2a2a2a;
  border-radius: 1px;
  background: #4b4b4b;
}

.check input:checked {
  background: #404040 url("data:image/svg+xml,%3Csvg xmlns='http://www.w3.org/2000/svg' viewBox='0 0 8 8'%3E%3Cpath d='m1 4 2 3 5-6' fill='none' stroke='%23fff' stroke-width='1.500'/%3E%3C/svg%3E") center / 100%;
}

.num {
  display: flex;
  align-items: center;
  height: 8px;
  padding: 0 2px;
  border: 1px solid #4a4a4a;
  border-radius: 4px;
  background: #a3a3a3;
  line-height: 6px;
  white-space: nowrap;
}

.num::before {
  content: "‹";
  margin-right: 2px;
  color: #444;
}

.num::after {
  content: "›";
  margin-left: 2px;
  color: #444;
}

.num input {
  flex: 1;
  width: 0;
  height: 6px;
  text-align: right;
}

.tool {
  display: flex;
  align-items: center;
  justify-content: center;
  width: 8px;
  height: 8px;
  border: 1px solid #3a3a3a;
  background: #505050;
}

.tool .icon {
  width: 6px;
  height: 6px;
}

.tool.on {
  background: #5380c4;
}

.tool.light {
  border-color: #4a4a4a;
  background: #8f8f8f;
}

.tool.faint {
  border-color: #666;
  background: #7b7b7b;
  opacity: 0.7;
}

.tool.users {
  width: 11px;
  background: #777;
  color: #444;
}

.editor-type {
  display: flex;
  flex: none;
  align-items: center;
  width: 13px;
  height: 8px;
  padding-left: 1px;
  border: 1px solid #2c2c2c;
  border-radius: 2px;
  background: url("data:image/svg+xml,%3Csvg xmlns='http://www.w3.org/2000/svg' viewBox='0 0 6 8'%3E%3Cpath d='M3 0 5 3H1zM3 8 1 5h4z' fill='%23ddd'/%3E%3C/svg%3E") no-repeat right center / 4px 5px, #474747;
}

.editor-type .icon {
  width: 6px;
  height: 6px;
}

.name-field {
  width: 50px;
  height: 8px;
  padding: 0 2px;
  border: 1px solid #4a4a4a;
  background: #9b9b9b;
  line-height: 6px;
}

.bar {
  display: flex;
  flex: none;
  align-items: center;
  height: 11px;
  padding: 0 4px;
  border-bottom: 1px solid #333;
  background: #696969;
  white-space: nowrap;
}

.info-bar {
  padding-left: 3px;
}

.menus {
  display: flex;
}

.menus button {
  padding: 0 4px;
}

.group {
  display: flex;
  margin-left: 3px;
}

.group.wide {
  margin-left: 8px;
}

.group.snug {
  margin-left: 0;
}

/* window title */
.titlebar {
  display: flex;
  flex: none;
  align-items: center;
  height: 10px;
  padding: 0 4px 0 1px;
  background: #fff;
  color: #999;
}

.titlebar .title {
  flex: 1;
  margin-left: 2px;
}

.win-btn {
  width: 20px;
  height: 8px;
}

.win-btn:last-child {
  width: 12px;
}

.win-btn svg {
  display: block;
  width: 5px;
  height: 5px;
  margin: auto;
  fill: none;
  stroke: #888;
}

.engine {
  width: 47px;
  margin-left: 7px;
}

.info-bar .logo {
  margin: 0 2px 0 7px;
}

.workspace {
  display: grid;
  flex: 1;
  grid-template-columns: 1fr 124px;
  gap: 2px;
  min-height: 0;
}

.editors {
  display: flex;
  flex-direction: column;
  min-width: 0;
  min-height: 0;
}

/* node editor */
.node-editor {
  display: grid;
  flex: 1;
  grid-template-columns: 1fr 7px;
  grid-template-rows: 1fr 8px;
  min-height: 0;
  background: #393939;
}

.canvas {
  position: relative;
  overflow: hidden;
  background:
    repeating-linear-gradient(90deg, #0001 0 1px, transparent 1px 25px),
    repeating-linear-gradient(#0001 0 1px, transparent 1px 25px),
    repeating-linear-gradient(90deg, #0002 0 1px, transparent 1px 5px),
    repeating-linear-gradient(#0002 0 1px, transparent 1px 5px),
    #3b3b3b;
}

.scroll-y {
  margin: 2px 1px 0;
  border-radius: 3px;
  background: #777;
}

.scroll-x {
  margin: 1px 2px 2px;
  border-radius: 3px;
  background: #7b7b7b;
}

.links {
  position: absolute;
  width: 100%;
  height: 100%;
  fill: none;
  stroke: #8d8d8d;
  stroke-width: 0.8;
}

.links .active {
  stroke: #ddd;
}

.node {
  position: absolute;
  width: 45px;
  padding-bottom: 1px;
  border-radius: 2px;
  background: #5e5e5e;
  box-shadow: 0 1px 3px #0009;
  font-size: 4px;
  line-height: 7px;
}

.node h2 {
  height: 8px;
  padding-left: 3px;
  border-radius: 2px 2px 0 0;
  background: linear-gradient(#545454 7px, #5e5e5e 7px);
  white-space: nowrap;
}

.node h2::before {
  content: "▾";
  margin-right: 2px;
}

.node .out,
.node .in {
  position: relative;
  height: 7px;
  padding: 0 5px;
}

.node .out {
  padding-right: 8px;
  text-align: right;
}

.node .out::after,
.node .in::before {
  content: "";
  position: absolute;
  top: 2px;
  width: 3px;
  height: 3px;
  border-radius: 2px;
  background: #b5b5b5;
}

.node .out::after {
  right: -1px;
}

.node .in::before {
  left: -1px;
}

.node .yellow::after, .node .yellow::before {
  background: #d2cb22;
}

.node .blue::after, .node .blue::before {
  background: #5a5fac;
}

.node .green::after, .node .green::before {
  background: #58c35c;
}

.node .space {
  margin-top: 1px;
}

.node div.in {
  padding: 0 3px;
}

.node .num {
  height: 6px;
  padding: 0 1px;
  border: 0;
  background: #aaa;
}

.node .num::before,
.node .num::after {
  margin: 0 1px;
}

.node .name {
  display: flex;
  gap: 2px;
  height: 7px;
  padding: 0 4px 0 6px;
}

.node .name input {
  flex: 1;
  width: 0;
  height: 6px;
  padding-left: 2px;
  border-radius: 1px;
  background: #b2b2b2;
}

.node > select {
  display: block;
  width: 38px;
  height: 7px;
  margin-left: 3px;
  line-height: 5px;
}

.node .check {
  height: 7px;
  padding-left: 4px;
}

.node .check input {
  width: 5px;
  height: 5px;
}

.attr-color { left: 259px; top: 45px; }
.scatter { left: 323px; top: 45px; }
.attr-density { left: 195px; top: 93px; }
.multiply-a { left: 259px; top: 93px; }
.absorption { left: 323px; top: 93px; }
.add-a { left: 387px; top: 93px; }
.add-b { left: 451px; top: 142px; }
.output { left: 515px; top: 142px; }
.emission { left: 334px; top: 196px; }
.multiply-b { left: 262px; top: 224px; }
.attr-flame { left: 192px; top: 246px; }

.math h2,
.ramp h2 {
  background: linear-gradient(#50545a 7px, #5e5e5e 7px);
}

.output h2 {
  height: 6px;
  line-height: 6px;
}

.ramp {
  left: 184px;
  top: 156px;
  width: 78px;
  outline: 1px solid #b0703a;
}

.ramp-tools {
  display: flex;
  height: 7px;
  margin: 2px 4px 0;
  color: #eee;
}

.ramp-tools button {
  width: 8px;
  line-height: 7px;
}

.ramp-tools select {
  flex: 1;
  height: 7px;
  padding-left: 1px;
  line-height: 5px;
}

.ramp-tools button:nth-of-type(3) {
  width: 14px;
}

.gradient {
  position: relative;
  height: 7px;
  margin: 1px 4px 0;
  background: linear-gradient(90deg, #ff801f, #f27a1f 35%, #1a0d04);
}

.stop {
  position: absolute;
  left: -1px;
  bottom: -1px;
  width: 3px;
  height: 4px;
  border: 1px solid #222;
  background: #ddd;
}

.stop.end {
  left: auto;
  right: -1px;
  background: #555;
}

.ramp-pos {
  display: flex;
  gap: 4px;
  height: 7px;
  margin: 3px 4px 0;
}

.ramp-pos .num:first-child {
  width: 20px;
}

.ramp-pos .num:last-child {
  flex: 1;
}

.swatch {
  display: block;
  width: 70px;
  height: 6px;
  margin: 1px 4px 2px;
  border-radius: 1px;
  background: #fb8022;
}

.node .factor {
  background: linear-gradient(90deg, #777 50%, #aaa 50%);
}

.expand {
  position: absolute;
  top: 8px;
  width: 5px;
  height: 8px;
  background: #222;
  color: #aaa;
}

.expand.left { left: 0; }
.expand.right { right: 0; }

.material-name {
  position: absolute;
  left: 13px;
  bottom: 2px;
  color: #eee;
}

.use-nodes {
  margin-left: 6px;
  color: #eee;
}

/* timeline */
.timeline {
  flex: none;
  overflow: hidden;
}

.track {
  display: flex;
  height: 20px;
}

.outside {
  background: repeating-linear-gradient(90deg, transparent 0 19px, #3d3d3d 19px 20px), #484848;
}

.before { flex: 124; }
.after { flex: 56; }

.range {
  position: relative;
  flex: 494;
  border-left: 1px solid #222;
  background: repeating-linear-gradient(90deg, transparent 0 4%, #646464 4% calc(4% + 1px)), #707070;
}

.keyframe,
.playhead {
  position: absolute;
  bottom: 1px;
  width: 1px;
  height: 12px;
  background: #a5a138;
}

.keyframe.first { left: 31%; }
.keyframe.second { left: 33%; }

.playhead {
  left: 45%;
  width: 2px;
  height: 20px;
  background: #4fb52e;
}

.ruler {
  display: flex;
  height: 7px;
  margin: 0 8px 0 -5px;
  line-height: 7px;
  text-align: center;
  background: #8a8a8a;
  box-shadow: 8px 0 #8a8a8a;
}

.ruler span {
  flex: 1;
  width: 0;
}

.timeline-bar {
  border-bottom: 0;
}

.frames .num {
  width: 47px;
}

.frames .num:first-child {
  border-radius: 4px 0 0 4px;
}

.frames .num:last-child {
  border-radius: 0 4px 4px 0;
}

.current {
  width: 38px;
  margin-left: 3px;
}

.transport {
  margin-left: 5px;
}

.sync {
  width: 48px;
  margin-left: 4px;
}

.auto {
  margin: 0 3px 0 6px;
}

/* outliner */
.sidebar {
  display: flex;
  flex-direction: column;
  min-height: 0;
  background: #727272;
}

.sidebar .bar {
  padding: 0 3px;
}

.sidebar .menus {
  margin-left: 1px;
}

.outliner {
  flex: none;
  border-bottom: 2px solid #333;
}

.outliner .bar {
  border: 0;
  padding-right: 0;
}

.display-mode {
  flex: none;
  width: 49px;
  margin-left: 1px;
}

.filter {
  flex: 1;
  margin-left: 3px;
}

.tree-box {
  display: flex;
  height: 56px;
  overflow: hidden;
}

.tree {
  display: grid;
  flex: 1;
  grid-auto-rows: 1fr;
  height: 58px;
  margin-left: 1px;
}

.tree li {
  display: flex;
  align-items: center;
  gap: 2px;
  padding-left: 16px;
}

.tree li .icon {
  width: 7px;
  height: 7px;
}

.tree li.root {
  padding-left: 8px;
}

.tree li:nth-child(odd) {
  background: #6c6c6c;
}

.tree li.selected {
  margin-right: 25px;
  background: #7c858d;
}

.tree .active span {
  color: #fff;
}

.tree b {
  margin: 0 1px;
  font-weight: normal;
}

.toggles {
  display: flex;
  gap: 1px;
  margin-left: auto;
}

.tree-scroll {
  width: 4px;
  height: 38px;
  margin: 1px 3px 0 2px;
  border-radius: 2px;
  background: #939393;
}

.tree-scroll-x {
  height: 4px;
  margin: 0 18px 2px 1px;
  border-radius: 2px;
  background: #999;
  box-shadow: 6px 0 #555;
}

/* properties */
.properties {
  display: flex;
  flex: 1;
  flex-direction: column;
  min-height: 0;
}

.tabs {
  display: flex;
  flex: 1;
  margin-left: 4px;
}

.tabs button {
  flex: 1;
  height: 8px;
  border: 1px solid #333;
  background: #4c4c4c;
}

.tabs .on {
  background: #5380c4;
}

.tabs .icon {
  width: 6px;
  height: 6px;
  margin: auto;
}

.panels-box {
  display: flex;
  flex: 1;
  min-height: 0;
  overflow: hidden;
}

.panels {
  flex: 1;
  min-width: 0;
  padding: 0 3px 0 2px;
}

.context {
  display: flex;
  align-items: center;
  gap: 2px;
  height: 15px;
  padding-left: 1px;
  border-bottom: 1px solid #5c5c5c;
}

.panels h3 {
  display: flex;
  align-items: center;
  height: 10px;
  padding-left: 2px;
  border-top: 1px solid #646464;
}

.panels h3::before {
  content: "";
  margin-right: 2px;
  border: 2px solid transparent;
  border-left: 3px solid #222;
  border-right: 0;
}

.panels h3.open {
  border-top-color: #7c7c7c;
}

.panels h3.open::before {
  border: 2px solid transparent;
  border-top: 3px solid #222;
  border-bottom: 0;
}

.panel {
  padding: 4px 2px 3px;
}

.render-panel {
  padding-bottom: 1px;
}

.row {
  display: flex;
  align-items: center;
  height: 8px;
  margin-top: 2px;
  white-space: nowrap;
}

.row:first-child,
.render-panel .row:first-child {
  margin-top: 0;
}

.render-panel .row {
  margin-top: 3px;
}

.row.tight {
  margin-top: 1px;
}

.row.pattern {
  margin-top: 4px;
}

.joined .action {
  display: flex;
  flex: 1;
  align-items: center;
  height: 8px;
  border: 1px solid #555;
  background: #999;
}

.action span {
  flex: 1;
}

.field > :first-child {
  flex: 0 0 38px;
  padding-left: 2px;
}

.field > :nth-child(2) {
  flex: 1;
}

.field .tool {
  margin-left: 2px;
}

.path input {
  flex: 1;
  height: 8px;
  padding: 0 2px;
  border: 1px solid #4a4a4a;
  background: #9e9e9e;
}

.halves {
  display: grid;
  grid-template-columns: 1fr 1fr;
  gap: 4px;
}

.halves > * {
  min-width: 0;
}

.halves > .check,
.halves > span {
  padding-left: 2px;
}

.check:has(:checked) {
  color: #eee;
}

.panels h3 .check:has(:checked) {
  color: #111;
}

.format {
  position: relative;
  display: flex;
}

.format .icon {
  position: absolute;
  left: 1px;
  top: 1px;
  width: 6px;
  height: 6px;
}

.format select {
  flex: 1;
  padding-left: 9px;
}

.switch {
  display: flex;
  height: 8px;
}

.switch button {
  flex: 1;
  border: 1px solid #333;
  background: #4a4a4a;
  color: #eee;
  line-height: 6px;
}

.switch .on {
  background: #5380c4;
  color: #111;
}

.presets select {
  flex: 1;
}

.row.stacks {
  align-items: start;
  height: 32px;
}

.stack .num {
  padding: 0 1px;
  border-radius: 0;
}

.stack .num::before {
  margin-right: 1px;
}

.stack .num::after {
  margin-left: 0;
}

.stack > :first-child,
.stack > :first-child .num {
  border-radius: 4px 4px 0 0;
}

.stack > .num:last-child {
  border-radius: 0 0 4px 4px;
}

.seed {
  display: flex;
}

.seed .num {
  flex: 1;
}

.panel-scroll {
  width: 5px;
  height: 308px;
  margin: 2px 3px 0 1px;
  border-radius: 3px;
  background: #8f8f8f;
}

/* taskbar */
.taskbar {
  display: flex;
  flex: none;
  height: 17px;
  background: linear-gradient(90deg, #0c0c0f 30%, #120607 65%, #170506);
  color: #eee;
}

.taskbar svg {
  display: block;
  width: 9px;
  height: 9px;
}

.start {
  width: 20px;
}

.taskbar .start svg {
  width: 7px;
  height: 7px;
  margin: auto;
}

.search {
  display: flex;
  flex: 0 1 143px;
  align-items: center;
  gap: 4px;
  padding: 0 4px;
  background: #f3f3f3;
  font-size: 6px;
}

.search input {
  flex: 1;
}

.search input::placeholder {
  color: #444;
}

.taskbar .search svg:last-child {
  width: 8px;
  height: 8px;
}

.apps {
  display: flex;
  flex: 0 1 450px;
}

.apps button {
  display: flex;
  flex: 1;
  align-items: center;
  justify-content: center;
}

.apps .running {
  box-shadow: inset 0 -1px #76a9d8;
}

.apps .focused {
  background: #3b4045;
}

.adobe {
  width: 10px;
  height: 9px;
  border: 1px solid;
  font-weight: bold;
  line-height: 7px;
  text-align: center;
}

.ae { background: #2b1b4a; color: #b394ef; }
.pr { background: #2b0b36; color: #d77cf0; }
.au { background: #07322e; color: #19b89c; }

.tray {
  display: flex;
  align-items: center;
  gap: 3px;
  margin-left: auto;
}

.taskbar .tray svg {
  width: 7px;
  height: 7px;
  fill: none;
  stroke: #ddd;
  stroke-width: 1.5;
}

.tray svg:first-child {
  margin-right: 4px;
}

.clock {
  display: flex;
  flex-direction: column;
  justify-content: center;
  width: 34px;
  margin-left: 2px;
  text-align: center;
}

.notify {
  width: 19px;
}
```
